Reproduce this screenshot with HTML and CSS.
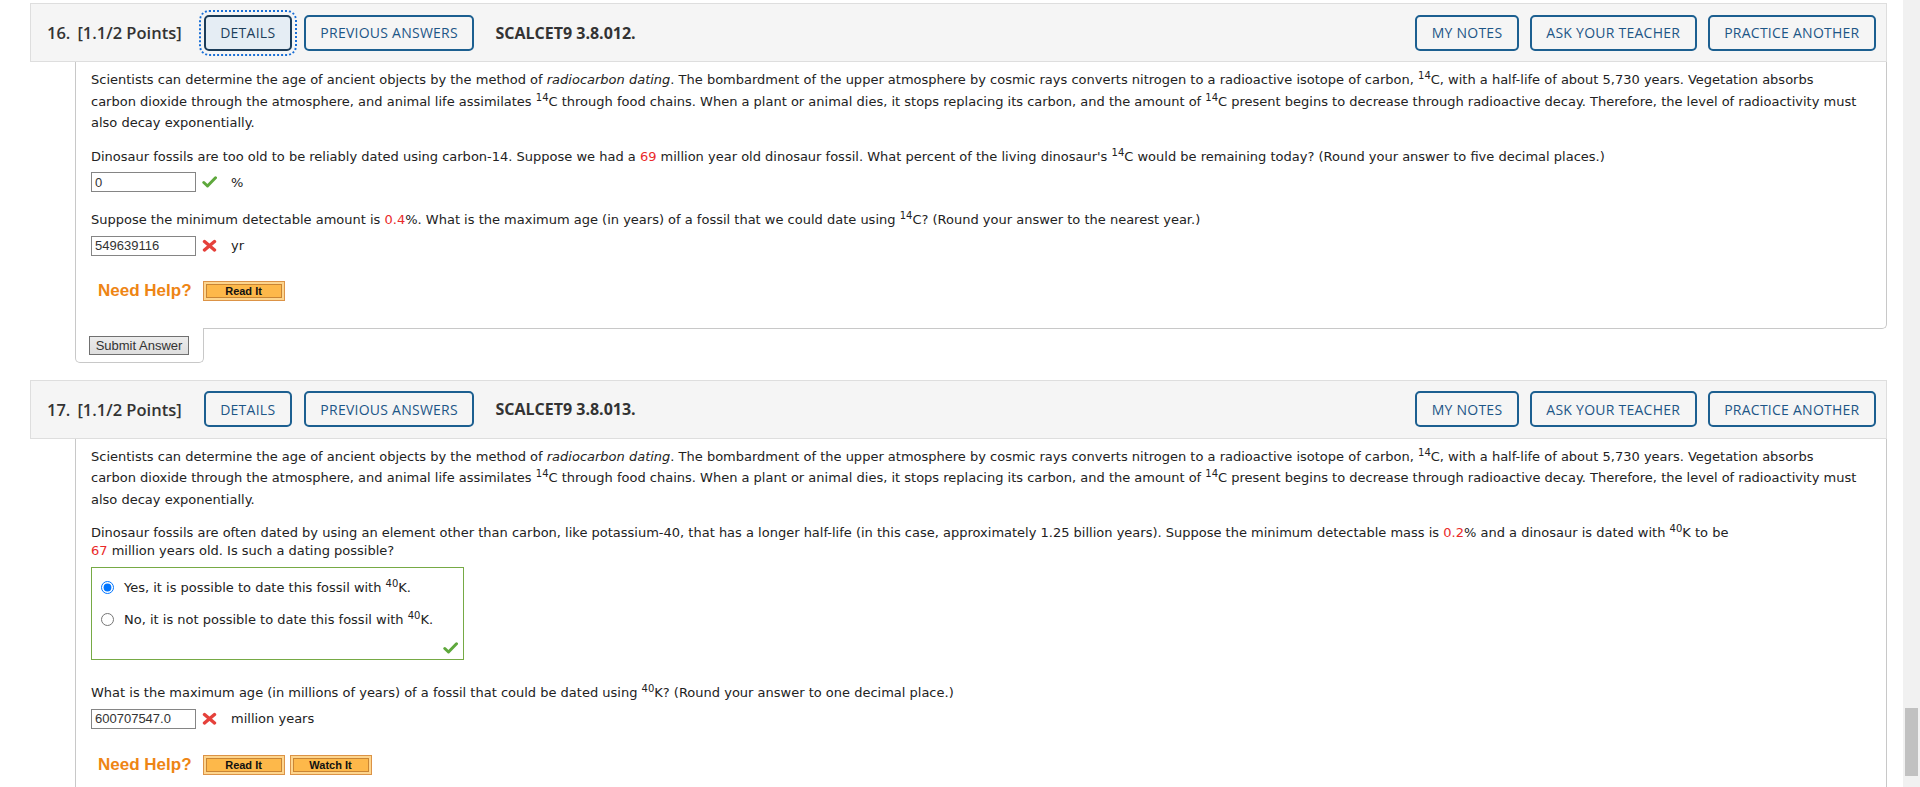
FILE: index.html
```html
<!DOCTYPE html>
<html>
<head>
<meta charset="utf-8">
<link rel="stylesheet" href="styles.css">
</head>
<body>
<div class="page">
  <div class="main">
    <div class="question">
      <div class="q-head">
        <span class="q-num">16.</span>
        <span class="q-pts">[1.1/2 Points]</span>
        <button class="hbtn focused">DETAILS</button>
        <button class="hbtn">PREVIOUS ANSWERS</button>
        <span class="q-code">SCALCET9 3.8.012.</span>
        <span class="spacer"></span>
        <button class="hbtn right">MY NOTES</button>
        <button class="hbtn right">ASK YOUR TEACHER</button>
        <button class="hbtn right">PRACTICE ANOTHER</button>
      </div>
      <div class="q-body">
        <p class="intro">Scientists can determine the age of ancient objects by the method of <i>radiocarbon dating</i>. The bombardment of the upper atmosphere by cosmic rays converts nitrogen to a radioactive isotope of carbon, <sup>14</sup>C, with a half-life of about 5,730 years. Vegetation absorbs<br>carbon dioxide through the atmosphere, and animal life assimilates <sup>14</sup>C through food chains. When a plant or animal dies, it stops replacing its carbon, and the amount of <sup>14</sup>C present begins to decrease through radioactive decay. Therefore, the level of radioactivity must<br>also decay exponentially.</p>
        <p class="prompt gap-14">Dinosaur fossils are too old to be reliably dated using carbon-14. Suppose we had a <span class="red">69</span> million year old dinosaur fossil. What percent of the living dinosaur's <sup>14</sup>C would be remaining today? (Round your answer to five decimal places.)</p>
        <div class="ans-row gap-6">
          <input class="ans" type="text" value="0">
          <svg class="mark" width="15" height="12" viewBox="0 0 15 12"><polyline points="1.8,6.5 5.5,10 13.5,1.8" fill="none" stroke="#5ea83c" stroke-width="3" stroke-linecap="round" stroke-linejoin="round"/></svg>
          <span class="unit">%</span>
        </div>
        <p class="prompt gap-19">Suppose the minimum detectable amount is <span class="red">0.4</span>%. What is the maximum age (in years) of a fossil that we could date using <sup>14</sup>C? (Round your answer to the nearest year.)</p>
        <div class="ans-row gap-6">
          <input class="ans" type="text" value="549639116">
          <svg class="mark" width="15" height="13" viewBox="0 0 15 13"><path d="M2.5 2.5 L12.5 11 M12.5 2.5 L2.5 11" fill="none" stroke="#e5413b" stroke-width="3.4" stroke-linecap="round"/></svg>
          <span class="unit">yr</span>
        </div>
        <div class="help gap-25">
          <span class="need">Need Help?</span>
          <span class="rbtn"><span class="rbtn-in">Read It</span></span>
        </div>
      </div>
      <div class="q-foot">
        <div class="tab"><button class="submit">Submit Answer</button></div>
      </div>
    </div>

    <div class="question">
      <div class="q-head">
        <span class="q-num">17.</span>
        <span class="q-pts">[1.1/2 Points]</span>
        <button class="hbtn">DETAILS</button>
        <button class="hbtn">PREVIOUS ANSWERS</button>
        <span class="q-code">SCALCET9 3.8.013.</span>
        <span class="spacer"></span>
        <button class="hbtn right">MY NOTES</button>
        <button class="hbtn right">ASK YOUR TEACHER</button>
        <button class="hbtn right">PRACTICE ANOTHER</button>
      </div>
      <div class="q-body open">
        <p class="intro">Scientists can determine the age of ancient objects by the method of <i>radiocarbon dating</i>. The bombardment of the upper atmosphere by cosmic rays converts nitrogen to a radioactive isotope of carbon, <sup>14</sup>C, with a half-life of about 5,730 years. Vegetation absorbs<br>carbon dioxide through the atmosphere, and animal life assimilates <sup>14</sup>C through food chains. When a plant or animal dies, it stops replacing its carbon, and the amount of <sup>14</sup>C present begins to decrease through radioactive decay. Therefore, the level of radioactivity must<br>also decay exponentially.</p>
        <p class="prompt gap-14">Dinosaur fossils are often dated by using an element other than carbon, like potassium-40, that has a longer half-life (in this case, approximately 1.25 billion years). Suppose the minimum detectable mass is <span class="red">0.2</span>% and a dinosaur is dated with <sup>40</sup>K to be<br><span class="red">67</span> million years old. Is such a dating possible?</p>
        <div class="choices gap-6">
          <label class="choice"><input type="radio" name="q17" checked><span>Yes, it is possible to date this fossil with <sup>40</sup>K.</span></label>
          <label class="choice"><input type="radio" name="q17"><span>No, it is not possible to date this fossil with <sup>40</sup>K.</span></label>
          <div class="choice-mark">
            <svg width="15" height="12" viewBox="0 0 15 12"><polyline points="1.8,6.5 5.5,10 13.5,1.8" fill="none" stroke="#5ea83c" stroke-width="3" stroke-linecap="round" stroke-linejoin="round"/></svg>
          </div>
        </div>
        <p class="prompt gap-24">What is the maximum age (in millions of years) of a fossil that could be dated using <sup>40</sup>K? (Round your answer to one decimal place.)</p>
        <div class="ans-row gap-7">
          <input class="ans" type="text" value="600707547.0">
          <svg class="mark" width="15" height="13" viewBox="0 0 15 13"><path d="M2.5 2.5 L12.5 11 M12.5 2.5 L2.5 11" fill="none" stroke="#e5413b" stroke-width="3.4" stroke-linecap="round"/></svg>
          <span class="unit">million years</span>
        </div>
        <div class="help gap-26">
          <span class="need">Need Help?</span>
          <span class="rbtn"><span class="rbtn-in">Read It</span></span>
          <span class="rbtn"><span class="rbtn-in">Watch It</span></span>
        </div>
      </div>
    </div>
  </div>
  <div class="scrollbar"><div class="thumb"></div></div>
</div>
</body>
</html>
```

FILE: styles.css
```css
html, body {
  margin: 0;
  padding: 0;
  background: #fff;
}
body {
  font-family: "DejaVu Sans", Verdana, sans-serif;
  font-size: 13px;
  color: #222;
}
.page {
  display: flex;
  height: 787px;
  overflow: hidden;
}
.main {
  flex: 1;
  min-width: 0;
  padding: 3px 16px 0 30px;
}
.scrollbar {
  width: 17px;
  flex: none;
  background: #f1f1f1;
  padding-top: 708px;
  box-sizing: border-box;
}
.thumb {
  margin: 0 2px;
  height: 68px;
  background: #c1c1c1;
}

.question {
  margin-bottom: 17px;
}
.q-head {
  height: 59px;
  box-sizing: border-box;
  border: 1px solid #dedede;
  background: #f5f5f5;
  display: flex;
  align-items: center;
  padding: 0 10px 0 16px;
  font-family: "Open Sans", "Liberation Sans", sans-serif;
  color: #333;
}
.q-num {
  font-size: 16.5px;
  font-weight: 600;
  margin-right: 7px;
}
.q-pts {
  font-size: 16.5px;
  font-weight: 600;
  margin-right: 22px;
}
.q-code {
  font-size: 16px;
  font-weight: 700;
  margin-left: 9px;
}
.spacer {
  flex: 1;
}
.hbtn {
  height: 36px;
  box-sizing: border-box;
  border: 2px solid #1c5f90;
  border-radius: 5px;
  background: transparent;
  padding: 0 14.5px;
  margin: 0 12px 0 0;
  font-family: "Open Sans", "Liberation Sans", sans-serif;
  font-size: 14px;
  font-weight: 400;
  letter-spacing: 0.25px;
  color: #1d5687;
  cursor: pointer;
}
.hbtn.right {
  margin: 0 0 0 11px;
}
.hbtn.focused {
  background: #e5edf4;
  border-color: #1b3c59;
  color: #1d3f5c;
  outline: 2px dotted #1a6fd6;
  outline-offset: 3px;
}

.q-body {
  margin-left: 45px;
  border: 1px solid #c8c8c8;
  border-top: none;
  border-radius: 0 0 5px 0;
  padding: 7px 15px 26px 15px;
}
.q-body.open {
  border-bottom: none;
  padding-bottom: 200px;
}
.q-body p {
  margin: 0;
}
.intro {
  line-height: 21.5px;
  white-space: nowrap;
}
.prompt {
  line-height: 18px;
  white-space: nowrap;
}
sup {
  font-size: 10px;
  line-height: 0;
  vertical-align: 5px;
}
.red {
  color: #ea2a2a;
}
.gap-6 { margin-top: 6.5px; }
.gap-7 { margin-top: 7px; }
.gap-14 { margin-top: 14px !important; }
.gap-19 { margin-top: 19px !important; }
.gap-24 { margin-top: 24px !important; }
.gap-25 { margin-top: 25px; }
.gap-26 { margin-top: 26px; }

.ans-row {
  display: flex;
  align-items: center;
  height: 20px;
}
.ans {
  width: 105px;
  height: 20px;
  box-sizing: border-box;
  margin: 0;
  border: 1px solid #858585;
  padding: 0 3px;
  font-family: "Liberation Sans", Arial, sans-serif;
  font-size: 13px;
  color: #333;
  background: #fff;
}
.mark {
  margin-left: 6px;
  flex: none;
}
.unit {
  margin-left: 14px;
}

.help {
  display: flex;
  align-items: center;
  height: 21px;
}
.need {
  font-family: "Liberation Sans", Arial, sans-serif;
  font-weight: bold;
  font-size: 17px;
  color: #ee8514;
  margin-left: 7px;
  margin-right: 11px;
}
.rbtn {
  width: 82px;
  height: 20px;
  box-sizing: border-box;
  border: 1px solid #dc9346;
  background: #fdd58e;
  padding: 2px;
  margin-right: 5px;
  display: flex;
}
.rbtn-in {
  flex: 1;
  border: 1px solid #c98534;
  background: #fdb84a;
  font-family: "Liberation Sans", Arial, sans-serif;
  font-weight: bold;
  font-size: 11px;
  color: #111;
  display: flex;
  align-items: center;
  justify-content: center;
}

.q-foot {
  display: flex;
}
.tab {
  margin-left: 45px;
  margin-top: -1px;
  background: #fff;
  border: 1px solid #c8c8c8;
  border-top: none;
  border-radius: 0 0 5px 5px;
  padding: 8px 14px 7px 13px;
  display: flex;
}
.submit {
  width: 100px;
  height: 19px;
  box-sizing: border-box;
  margin: 0;
  padding: 0;
  border: 1px solid #707070;
  background: linear-gradient(#ececec, #dedede);
  font-family: "Liberation Sans", Arial, sans-serif;
  font-size: 13px;
  color: #333;
}

.choices {
  width: 373px;
  box-sizing: border-box;
  border: 1px solid #76aa45;
  padding: 4px 5px 6px 9px;
}
.choice {
  display: flex;
  align-items: center;
  height: 32px;
  white-space: nowrap;
}
.choice input {
  width: 13px;
  height: 13px;
  margin: 0 10px 0 0;
  flex: none;
}
.choice-mark {
  display: flex;
  justify-content: flex-end;
  margin-top: 6px;
  height: 11px;
}
```
